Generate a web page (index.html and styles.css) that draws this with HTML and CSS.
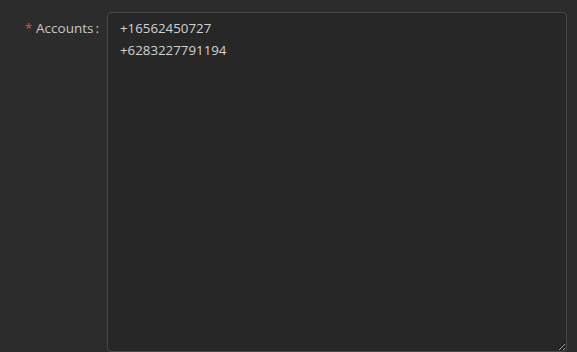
FILE: index.html
```html
<!DOCTYPE html>
<html>
<head>
<meta charset="utf-8">
<link rel="stylesheet" href="styles.css">
</head>
<body>
<div class="form">
  <div class="row">
    <label class="label" for="acc"><span class="req">*</span>Accounts<span class="colon">:</span></label>
    <textarea id="acc" class="input">+16562450727
+6283227791194</textarea>
  </div>
</div>
</body>
</html>
```
FILE: styles.css
```css
html, body {
  margin: 0;
  padding: 0;
  background: #2c2c2c;
  height: 100%;
  overflow: hidden;
}
.form {
  padding-top: 12px;
  font-family: "Open Sans", "Noto Sans", sans-serif;
}
.row {
  display: flex;
  align-items: flex-start;
}
.label {
  width: 107px;
  box-sizing: border-box;
  text-align: right;
  color: #c8c8c8;
  font-size: 13.5px;
  line-height: 22px;
  padding-top: 5px;
  padding-right: 8px;
  white-space: nowrap;
}
.req {
  color: #d9534f;
  margin-right: 4px;
  font-size: 13px;
}
.colon {
  margin-left: 2px;
}
.input {
  width: 460px;
  height: 340px;
  box-sizing: border-box;
  background: #272727;
  border: 1px solid #474747;
  border-radius: 4px;
  color: #d2d2d2;
  font-family: "Open Sans", "Noto Sans", sans-serif;
  font-size: 13.3px;
  line-height: 22px;
  padding: 4px 12px;
  margin: 0;
  resize: vertical;
  outline: none;
}
```
